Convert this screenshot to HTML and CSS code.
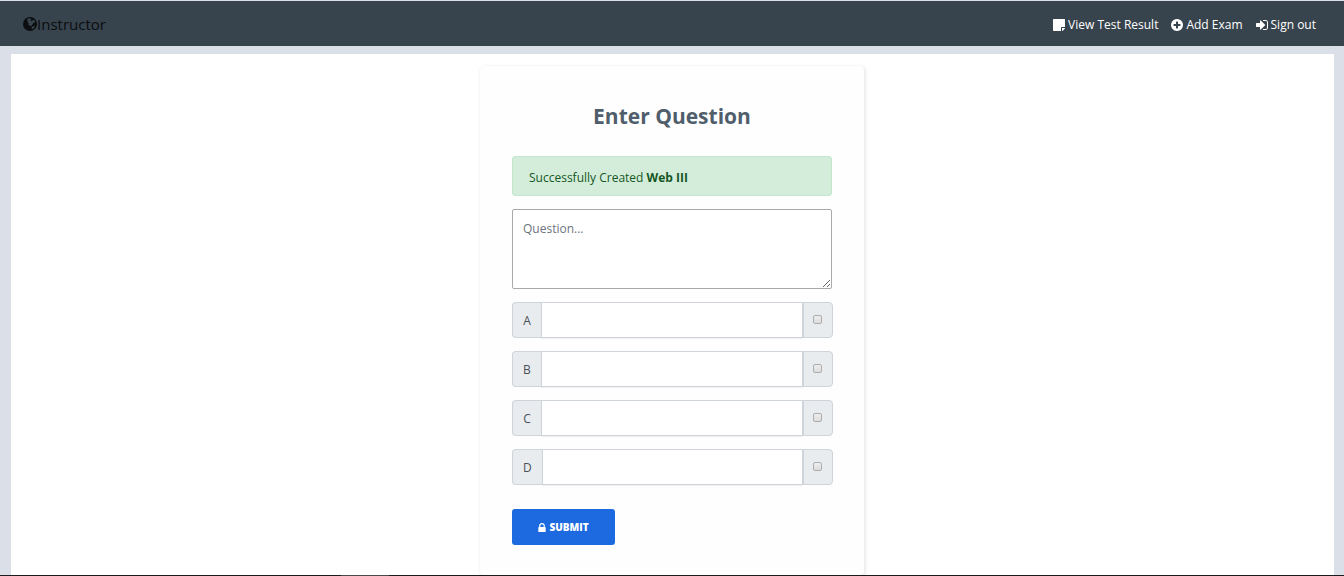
FILE: index.html
```html
<!DOCTYPE html>
<html lang="en">
<head>
<meta charset="utf-8">
<meta name="viewport" content="width=device-width, initial-scale=1">
<title>Enter Question</title>
<link rel="stylesheet" href="styles.css">
</head>
<body>
<div class="page">
  <header class="navbar">
    <a class="brand" href="#"><svg class="brand-icon" viewBox="0 0 14 14" aria-hidden="true"><path fill="currentColor" fill-rule="evenodd" d="M7 0a7 7 0 1 0 0 14A7 7 0 0 0 7 0ZM5 1.500 7.200 1.200 8.400 2.200 7.600 3.200 8.800 4.200 10.200 2.800 11.800 3.400 12.400 5 11 5.600 9.800 6.800 8.800 8.600 7.400 9.200 6.400 8.200 5.200 7.400 5.800 6 4.400 5.400 4.800 4 3.800 3ZM8.800 10.200 10.400 9 12 8.800 11.400 10.600 9.800 12 8.600 12.200Z"/></svg>Instructor</a>
    <nav class="nav-links">
      <a class="nav-link" href="#"><svg class="nav-icon" viewBox="0 0 12 12" aria-hidden="true"><path fill="currentColor" d="M.7 0h10.600q.7 0 .7.700V8H8.700Q8 8 8 8.700V12H.7Q0 12 0 11.300V.7Q0 0 .7 0ZM9 9h3q-.1.700-.5 1.100l-1.400 1.400Q9.700 11.900 9 12Z"/></svg>View Test Result</a>
      <a class="nav-link" href="#"><svg class="nav-icon" viewBox="128 128 1536 1536" aria-hidden="true"><path fill="currentColor" d="M1344 960v-128q0-26-19-45t-45-19h-256v-256q0-26-19-45t-45-19h-128q-26 0-45 19t-19 45v256h-256q-26 0-45 19t-19 45v128q0 26 19 45t45 19h256v256q0 26 19 45t45 19h128q26 0 45-19t19-45v-256h256q26 0 45-19t19-45zm320-64q0 209-103 385.500t-279.500 279.500-385.500 103-385.500-103-279.500-279.500-103-385.500 103-385.500 279.500-279.500 385.500-103 385.500 103 279.500 279.500 103 385.500z"/></svg>Add Exam</a>
      <a class="nav-link" href="#"><svg class="nav-icon" viewBox="128 128 1536 1536" aria-hidden="true"><path fill="currentColor" d="M1312 896q0 26-19 45l-544 544q-19 19-45 19t-45-19-19-45v-288h-448q-26 0-45-19t-19-45v-384q0-26 19-45t45-19h448v-288q0-26 19-45t45-19 45 19l544 544q19 19 19 45zm352-352v704q0 119-84.500 203.500t-203.500 84.500h-320q-13 0-22.500-9.500t-9.500-22.500q0-4-1-20t-.5-26.500 3-23.500 10-19.500 20.500-6.500h320q66 0 113-47t47-113v-704q0-66-47-113t-113-47h-312l-11.500-1-11.500-3-8-5.500-7-9-2-13.500q0-4-1-20t-.5-26.500 3-23.500 10-19.500 20.500-6.500h320q119 0 203.500 84.500t84.500 203.500z"/></svg>Sign out</a>
    </nav>
  </header>
  <main class="content">
    <form class="card">
      <h1 class="title">Enter Question</h1>
      <p class="alert" role="status">Successfully Created <strong>Web III</strong></p>
      <textarea class="question" aria-label="Question" placeholder="Question..."></textarea>
      <div class="option"><label class="addon" for="a">A</label><input class="answer" id="a" type="text"><span class="addon addon-end"><input class="check" type="checkbox" aria-label="A is correct"></span></div>
      <div class="option"><label class="addon" for="b">B</label><input class="answer" id="b" type="text"><span class="addon addon-end"><input class="check" type="checkbox" aria-label="B is correct"></span></div>
      <div class="option"><label class="addon" for="c">C</label><input class="answer" id="c" type="text"><span class="addon addon-end"><input class="check" type="checkbox" aria-label="C is correct"></span></div>
      <div class="option"><label class="addon" for="d">D</label><input class="answer" id="d" type="text"><span class="addon addon-end"><input class="check" type="checkbox" aria-label="D is correct"></span></div>
      <button class="submit" type="submit"><svg class="lock" viewBox="320 128 1152 1408" aria-hidden="true"><path fill="currentColor" d="M640 768h512v-192q0-106-75-181t-181-75-181 75-75 181v192zm832 96v576q0 40-28 68t-68 28h-960q-40 0-68-28t-28-68v-576q0-40 28-68t68-28h32v-192q0-184 132-316t316-132 316 132 132 316v192h32q40 0 68 28t28 68z"/></svg>SUBMIT</button>
    </form>
  </main>
  <footer class="edge"><span class="edge-mark"></span></footer>
</div>
</body>
</html>
```
FILE: styles.css
```css
*, *::before, *::after { box-sizing: border-box; }

body {
  margin: 0;
  background: #dbdfe8;
  color: #505e6c;
  font: 12px/20px "Open Sans", "Noto Sans", sans-serif;
}

.page {
  display: flex;
  flex-direction: column;
  min-height: 100vh;
  padding-top: 1px;
}

.navbar {
  display: flex;
  align-items: center;
  justify-content: space-between;
  height: 45px;
  padding: 0 28px 0 23px;
  background: #37434d;
}

.brand {
  display: flex;
  align-items: center;
  color: #0b0d0f;
  font-size: 15px;
  text-decoration: none;
}

.brand-icon { width: 14px; height: 14px; }

.nav-links {
  display: flex;
  gap: 13px;
  padding-top: 2px;
}

.nav-link {
  display: flex;
  align-items: center;
  gap: 3px;
  color: #fff;
  text-decoration: none;
}

.nav-icon { width: 12px; height: 12px; }

.content {
  display: flex;
  flex: 1;
  justify-content: center;
  margin: 8px 10px 0 11px;
  padding: 12px 13px 0 12px;
  background: #fff;
}

.card {
  display: flex;
  flex-direction: column;
  gap: 13px;
  width: 100%;
  max-width: 384px;
  padding: 34px 32px 30px;
  border-radius: 4px;
  background: #fefefe;
  box-shadow: 1px 1px 4px rgba(0, 0, 0, 0.12);
}

.title {
  margin: 0 0 11px;
  font-size: 21px;
  line-height: 32px;
  text-align: center;
}

.alert {
  margin: 0;
  padding: 11px 16px 7px;
  border: 1px solid #c3e6cb;
  border-radius: 3px;
  background: #d4edda;
  color: #155724;
}

.question {
  display: block;
  width: 100%;
  height: 80px;
  padding: 9px 10px;
  border: 1px solid #a9a9a9;
  border-radius: 2px;
  background: #fff;
  font: inherit;
  resize: vertical;
}

.question::placeholder { color: #6c757d; }

.option {
  display: flex;
  height: 36px;
  margin-right: -1px;
}

.addon {
  display: flex;
  align-items: center;
  justify-content: center;
  min-width: 29px;
  padding: 2px 10px 0;
  border: 1px solid #ced4da;
  border-right: 0;
  border-radius: 4px 0 0 4px;
  background: #e9ecef;
  color: #495057;
}

.addon-end {
  padding: 0 10px 2px 9px;
  border: 1px solid #ced4da;
  border-radius: 0 4px 4px 0;
}

.answer {
  flex: 1;
  min-width: 0;
  padding: 0 10px;
  border: 1px solid #ced4da;
  background: #fff;
  font: inherit;
  box-shadow: 0 1px 1px rgba(0, 0, 0, 0.05);
}

.check {
  width: 9px;
  height: 9px;
  margin: 0;
  border: 1px solid #adadad;
  border-radius: 2px;
  background: linear-gradient(#eee, #dcdcdc);
  appearance: none;
}

.check:checked { background: #1d6ae0; }

.submit {
  display: flex;
  align-items: center;
  align-self: flex-start;
  justify-content: center;
  gap: 3px;
  min-width: 103px;
  height: 36px;
  margin-top: 11px;
  padding: 0 20px;
  border: 0;
  border-radius: 3px;
  background: #1d6ae0;
  color: #fff;
  font: 800 10px/20px "Open Sans", sans-serif;
}

.lock { width: 8px; height: 9px; }

.edge {
  height: 1px;
  padding-left: 341px;
  background: #1b1b1f;
}

.edge-mark {
  display: block;
  width: 48px;
  height: 1px;
  background: #4a4a4e;
}
```
